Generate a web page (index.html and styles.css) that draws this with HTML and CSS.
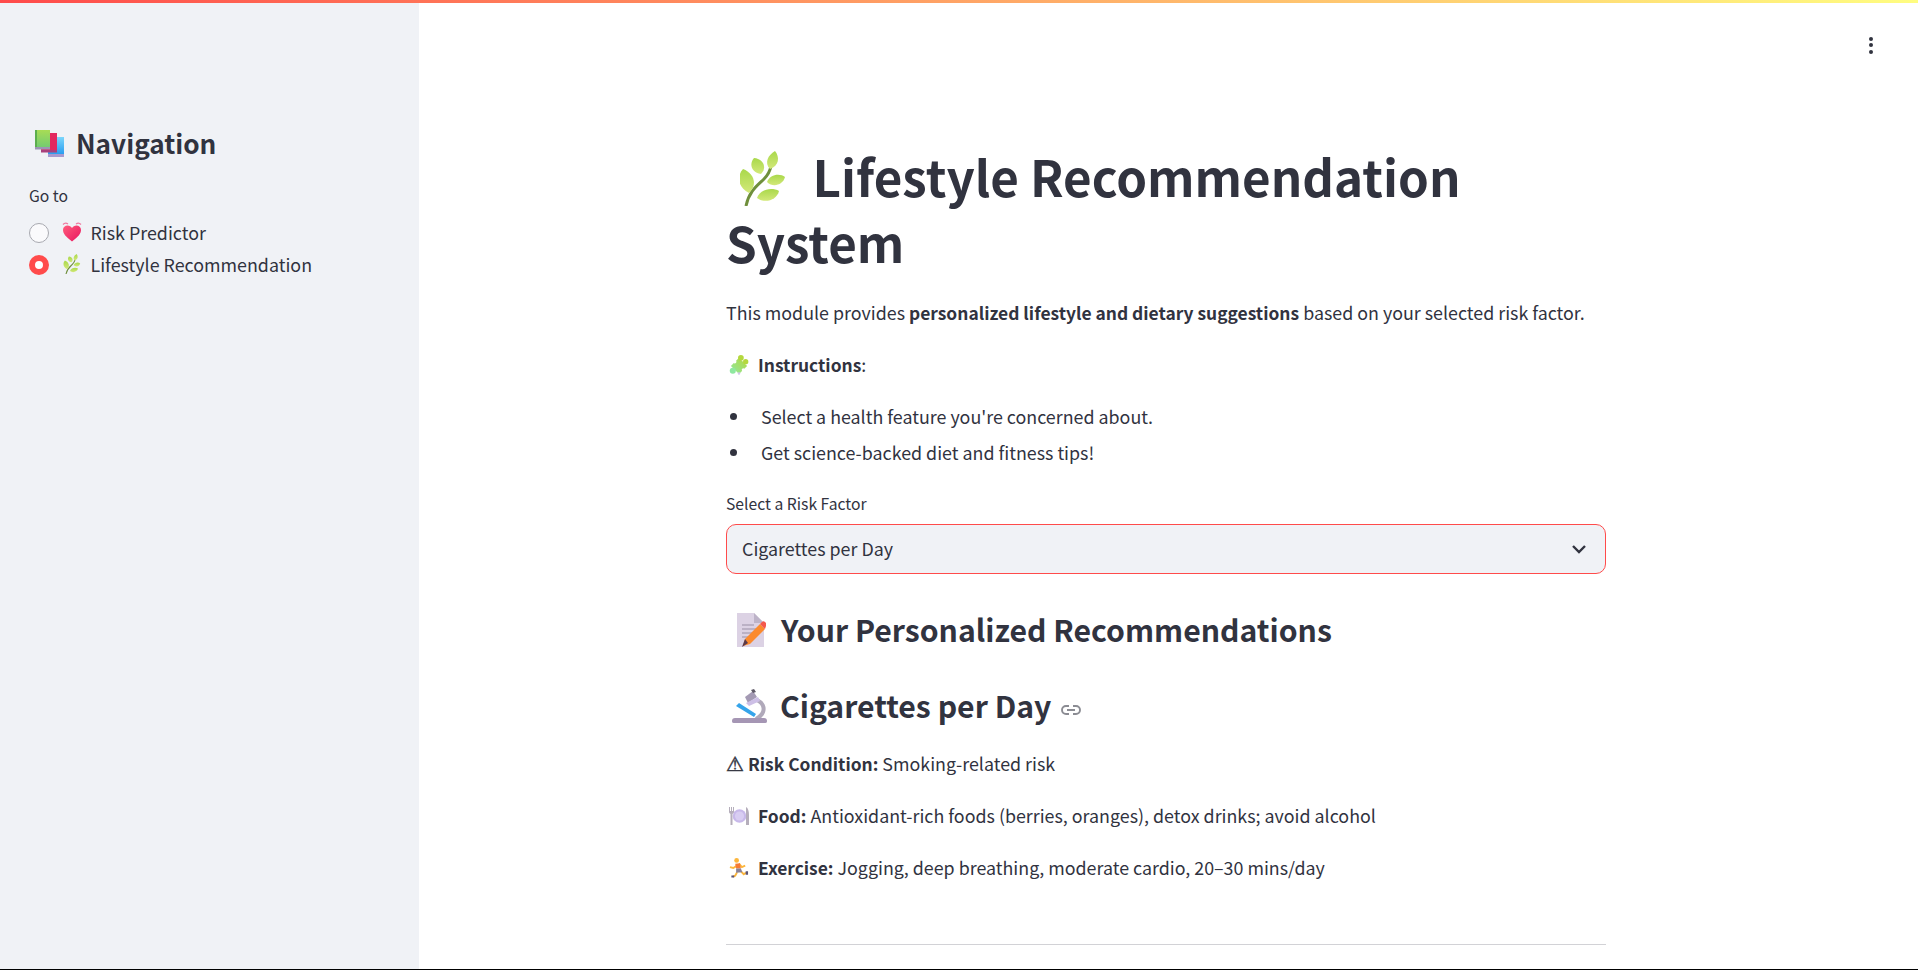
FILE: index.html
```html
<!DOCTYPE html>
<html lang="en">
<head>
    <meta charset="UTF-8">
    <meta name="viewport" content="width=device-width, initial-scale=1.0">
    <title>Lifestyle Recommendation System</title>
    <link rel="stylesheet" href="styles.css">
</head>
<body>
    <svg class="defs" aria-hidden="true">
        <defs>
            <linearGradient id="leaf" x1="0" y1="0" x2="0" y2="1">
                <stop offset="0" stop-color="#a9d84a"/>
                <stop offset="1" stop-color="#d3e97a"/>
            </linearGradient>
            <linearGradient id="heartfill" x1="0" y1="0" x2="1" y2="1">
                <stop offset="0" stop-color="#ff5c7c"/>
                <stop offset="1" stop-color="#e8155f"/>
            </linearGradient>
            <linearGradient id="greenbook" x1="0" y1="0" x2="0" y2="1">
                <stop offset="0" stop-color="#a8dc55"/>
                <stop offset="1" stop-color="#74cc70"/>
            </linearGradient>
            <linearGradient id="bluebook" x1="0" y1="0" x2="0" y2="1">
                <stop offset="0" stop-color="#7cd6fb"/>
                <stop offset="1" stop-color="#2a9df0"/>
            </linearGradient>
            <linearGradient id="puzzlefill" x1="1" y1="0" x2="0" y2="1">
                <stop offset="0" stop-color="#b4d83e"/>
                <stop offset="1" stop-color="#8fe8a0"/>
            </linearGradient>
            <symbol id="herb" viewBox="0 0 45 55">
                <path d="M6 55C9 40 18 34 24 28C28 24 30 20 31 15" fill="none" stroke="#6f8f3c" stroke-width="3"/>
                <path d="M9 42C-3 36-3 24 3 18C14 22 18 34 9 42Z" fill="url(#leaf)"/>
                <path d="M21 23C11 21 9 13 14 7C24 8 27 17 21 23Z" fill="url(#leaf)"/>
                <path d="M30 18C24 12 28 4 35 0C40 6 39 15 30 18Z" fill="url(#leaf)"/>
                <path d="M27 31C30 23 40 22 45 26C43 34 33 37 27 31Z" fill="url(#leaf)"/>
                <path d="M17 47C20 38 32 36 39 40C37 49 25 53 17 47Z" fill="url(#leaf)"/>
            </symbol>
            <symbol id="books" viewBox="0 0 30 28">
                <path d="M13 8H29V25H13Z" fill="url(#bluebook)"/>
                <path d="M13 25H29V28H13Z" fill="#a79ad0"/>
                <path d="M6 4H22V21H6Z" fill="#e3285f"/>
                <path d="M6 21H22V23.500H6Z" fill="#a8407c"/>
                <path d="M0 1H15V18H0Z" fill="url(#greenbook)"/>
                <path d="M0 1H2V18H0Z" fill="#5cae4e"/>
                <path d="M0 18H15V20.500H0Z" fill="#9c94b4"/>
            </symbol>
            <symbol id="heart" viewBox="0 0 20 20">
                <path d="M10 19.500C4 15 1 11.500 1 8C1 5 3.200 3.500 5.500 3.500C7.500 3.500 9 4.500 10 6C11 4.500 12.500 3.500 14.500 3.500C16.800 3.500 19 5 19 8C19 11.500 16 15 10 19.500Z" fill="url(#heartfill)"/>
                <path d="M1 2.500C2.500 .8 4.500 .8 6 2M14 2C15.500 .8 17.500 .8 19 2.500" fill="none" stroke="#f07aa0" stroke-width="1.200"/>
            </symbol>
            <symbol id="puzzle" viewBox="0 0 20 21">
                <path d="M10 3L18.500 11.500L10 20L1.500 11.500Z" fill="url(#puzzlefill)"/>
                <circle cx="12" cy="3" r="3" fill="#b4d83e"/>
                <circle cx="17" cy="7" r="2.800" fill="#b4d83e"/>
                <circle cx="3.500" cy="16.500" r="3.200" fill="#8fe8a0"/>
                <circle cx="5.500" cy="7" r="1.800" fill="#fff"/>
                <circle cx="14.500" cy="15.500" r="1.600" fill="#fff"/>
                <circle cx="10" cy="19.500" r="1.300" fill="#d3c6ea"/>
            </symbol>
            <symbol id="memo" viewBox="0 0 30 35">
                <path d="M1 0H18L28 10V34H1Z" fill="#dcd2e4"/>
                <path d="M18 0L28 10H18Z" fill="#bdb3c8"/>
                <path d="M6 12H18M6 16H22M6 20H20M6 24H14" stroke="#9a90a6" stroke-width="1"/>
                <path d="M7 33L9 26L24 11L29 16L14 31Z" fill="#fb8a2e"/>
                <path d="M24 11L26 9C27 8 28 8 29 9L30 10C31 11 31 12 30 13L29 16Z" fill="#f4584c"/>
                <path d="M6 34L9 26L12 30Z" fill="#5b3a4a"/>
            </symbol>
            <symbol id="scope" viewBox="0 0 35 34">
                <path d="M25 11C33 15 35 24 24 30" fill="none" stroke="#b0a9ba" stroke-width="4"/>
                <path d="M13 8L21 2L25 8L16 14Z" fill="#a49ab4"/>
                <path d="M19 1L22 0L24 3L21 4Z" fill="#5f5a68"/>
                <path d="M14 14L26 8L28 12L17 17Z" fill="#cdbfe6"/>
                <path d="M4 17L7 14L24 25L22 28Z" fill="#35a4ea"/>
                <path d="M0 32C0 30 1 29 3 29H32C34 29 35 30 35 32C35 34 34 34 32 34H3C1 34 0 34 0 32Z" fill="#a596b4"/>
            </symbol>
            <symbol id="plate" viewBox="0 0 20 18">
                <circle cx="10.500" cy="9" r="6.800" fill="#c8b9ea"/>
                <circle cx="10.500" cy="9" r="4.600" fill="#d8cdf2"/>
                <path d="M0 0V5C0 6 1 6.500 1.500 7V18H3.500V7C4 6.500 5 6 5 5V0H4V4H3V0H2V4H1V0Z" fill="#b5aebb"/>
                <path d="M17 18V0C19 1 20 4 20 8V18Z" fill="#b5aebb"/>
            </symbol>
            <symbol id="runner" viewBox="0 0 20 21">
                <path d="M8 8L4 10.500L.5 9.500M10 6L13 9.500L16.500 8M8 15L6 18.500L3.500 19.500M12 14L15 17L17.500 15.500" fill="none" stroke="#fcb63c" stroke-width="2"/>
                <circle cx="7.500" cy="2.500" r="2.500" fill="#fcb63c"/>
                <path d="M6 6L11 5.500L12 11H7Z" fill="#f57a35"/>
                <path d="M7 11H12L13.500 15L7 15.500Z" fill="#8a8296"/>
                <path d="M2 18.500H5V20.500H2ZM17 14H19.500V17.500H17Z" fill="#5a5478"/>
            </symbol>
        </defs>
    </svg>

    <div class="topbar"></div>

    <div class="app">
        <aside class="sidebar">
            <h2 class="nav-title">
                <svg class="ico ico-books"><use href="#books"/></svg>Navigation
            </h2>
            <div class="nav-label">Go to</div>
            <div class="radio-row">
                <span class="radio"></span>
                <svg class="ico ico-radio"><use href="#heart"/></svg>
                <span>Risk Predictor</span>
            </div>
            <div class="radio-row">
                <span class="radio checked"></span>
                <svg class="ico ico-radio"><use href="#herb"/></svg>
                <span>Lifestyle Recommendation</span>
            </div>
        </aside>

        <main class="main">
            <div class="menu-btn">
                <span></span><span></span><span></span>
            </div>

            <div class="block">
                <h1><svg class="ico ico-h1"><use href="#herb"/></svg>Lifestyle Recommendation System</h1>

                <p>This module provides <strong>personalized lifestyle and dietary suggestions</strong> based on your selected risk factor.</p>
                <p><svg class="ico ico-line"><use href="#puzzle"/></svg><strong>Instructions</strong>:</p>

                <ul>
                    <li>Select a health feature you're concerned about.</li>
                    <li>Get science-backed diet and fitness tips!</li>
                </ul>

                <label class="select-label">Select a Risk Factor</label>
                <div class="select">
                    <span>Cigarettes per Day</span>
                    <svg class="chevron" viewBox="0 0 16 10"><path d="M2 2L8 8L14 2" fill="none" stroke="#31333f" stroke-width="2.400"/></svg>
                </div>

                <h3 class="h-first"><svg class="ico ico-memo"><use href="#memo"/></svg>Your Personalized Recommendations</h3>
                <h3 class="h-second"><svg class="ico ico-scope"><use href="#scope"/></svg>Cigarettes per Day<svg class="link-ico" viewBox="0 0 20 10"><path d="M8 1H5C2.800 1 1 2.800 1 5S2.800 9 5 9H8M12 1H15C17.200 1 19 2.800 19 5S17.200 9 15 9H12M6 5H14" fill="none" stroke="#8b8c93" stroke-width="1.900"/></svg></h3>

                <p><span class="warn">⚠</span> <strong>Risk Condition:</strong> Smoking-related risk</p>
                <p><svg class="ico ico-line"><use href="#plate"/></svg><strong>Food:</strong> Antioxidant-rich foods (berries, oranges), detox drinks; avoid alcohol</p>
                <p><svg class="ico ico-line"><use href="#runner"/></svg><strong>Exercise:</strong> Jogging, deep breathing, moderate cardio, 20–30 mins/day</p>

                <hr>
            </div>
        </main>
    </div>
</body>
</html>
```

FILE: styles.css
```css
* {
    box-sizing: border-box;
}

html, body {
    margin: 0;
    height: 970px;
    overflow: hidden;
}

body {
    display: flex;
    flex-direction: column;
    font-family: "Noto Sans CJK SC", "Noto Sans", sans-serif;
    font-size: 17.85px;
    line-height: 32px;
    color: #31333f;
    background-color: #fff;
    border-bottom: 1px solid #000;
}

.defs {
    display: block;
    width: 0;
    height: 0;
}

.topbar {
    height: 3px;
    flex-shrink: 0;
    background: linear-gradient(90deg, #ff4b4b, #fffd80);
}

.app {
    flex: 1;
    display: flex;
    min-height: 0;
}

.ico {
    display: inline-block;
}

/* sidebar */
.sidebar {
    width: 419px;
    flex-shrink: 0;
    background-color: #f0f2f6;
    padding: 118px 29px 0;
}

.nav-title {
    display: flex;
    align-items: center;
    margin: 0 0 19px;
    font-size: 26.2px;
    line-height: 44px;
    font-weight: 700;
}

.ico-books {
    width: 30px;
    height: 28px;
    margin: 0 11px 0 6px;
}

.nav-label {
    font-size: 15.7px;
    line-height: 24px;
    margin-bottom: 8px;
}

.radio-row {
    display: flex;
    align-items: center;
    height: 32px;
    font-size: 17.85px;
}

.radio {
    width: 20px;
    height: 20px;
    margin-top: 1px;
    border-radius: 50%;
    border: 1px solid #a8a9b0;
    background-color: #fafafc;
    margin-right: 13px;
}

.radio.checked {
    border: 6px solid #ff4b4b;
    background-color: #fff;
}

.ico-radio {
    width: 20px;
    height: 20px;
    margin-right: 8.500px;
}

/* main column */
.main {
    flex: 1;
    min-width: 0;
    position: relative;
    padding-right: 5px;
}

.menu-btn {
    position: absolute;
    top: 34px;
    right: 45px;
    display: flex;
    flex-direction: column;
    gap: 2.300px;
}

.menu-btn span {
    width: 4px;
    height: 4px;
    border-radius: 50%;
    background-color: #31333f;
}

.block {
    width: 880px;
    margin: 0 auto;
    padding-top: 140px;
}

h1 {
    margin: 0 0 21px;
    font-size: 49.3px;
    line-height: 66px;
    font-weight: 700;
}

.ico-h1 {
    width: 45px;
    height: 55px;
    margin: 0 27.500px 0 14px;
    vertical-align: -9px;
}

p {
    margin: 0 0 19px;
}

strong {
    font-size: 17.4px;
    font-weight: 700;
}

.ico-line {
    width: 20px;
    height: 20px;
    margin: 0 9px 0 3px;
    vertical-align: -3px;
}

.warn {
    font-family: "DejaVu Sans", sans-serif;
    font-size: 20px;
    font-weight: 700;
    -webkit-text-stroke: 0.5px #31333f;
}

ul {
    margin: 0 0 24px;
    padding-left: 25px;
}

li {
    padding-left: 10px;
    margin-bottom: 4px;
}

.select-label {
    display: block;
    font-size: 15.7px;
    line-height: 24px;
    margin-bottom: 8px;
}

.select {
    display: flex;
    align-items: center;
    justify-content: space-between;
    height: 50px;
    padding: 0 18px 3px 15px;
    background-color: #f0f2f6;
    border: 1px solid #ff4b4b;
    border-radius: 10px;
}

.chevron {
    width: 16px;
    height: 10px;
    margin-top: 3px;
}

h3 {
    margin: 0 0 20px;
    font-size: 30.2px;
    line-height: 44px;
    font-weight: 700;
}

.h-first {
    margin-top: 33px;
}

.h-second {
    margin-top: 32px;
}

.ico-memo {
    width: 30px;
    height: 35px;
    margin: 0 15px 0 10px;
    vertical-align: -6px;
}

.ico-scope {
    width: 35px;
    height: 34px;
    margin: 0 13px 0 6px;
    vertical-align: -5px;
}

.link-ico {
    width: 20px;
    height: 10px;
    margin-left: 10px;
    vertical-align: 3px;
}

hr {
    margin: 60px 0 0;
    border: none;
    border-top: 1px solid #d2d2d6;
}
```
